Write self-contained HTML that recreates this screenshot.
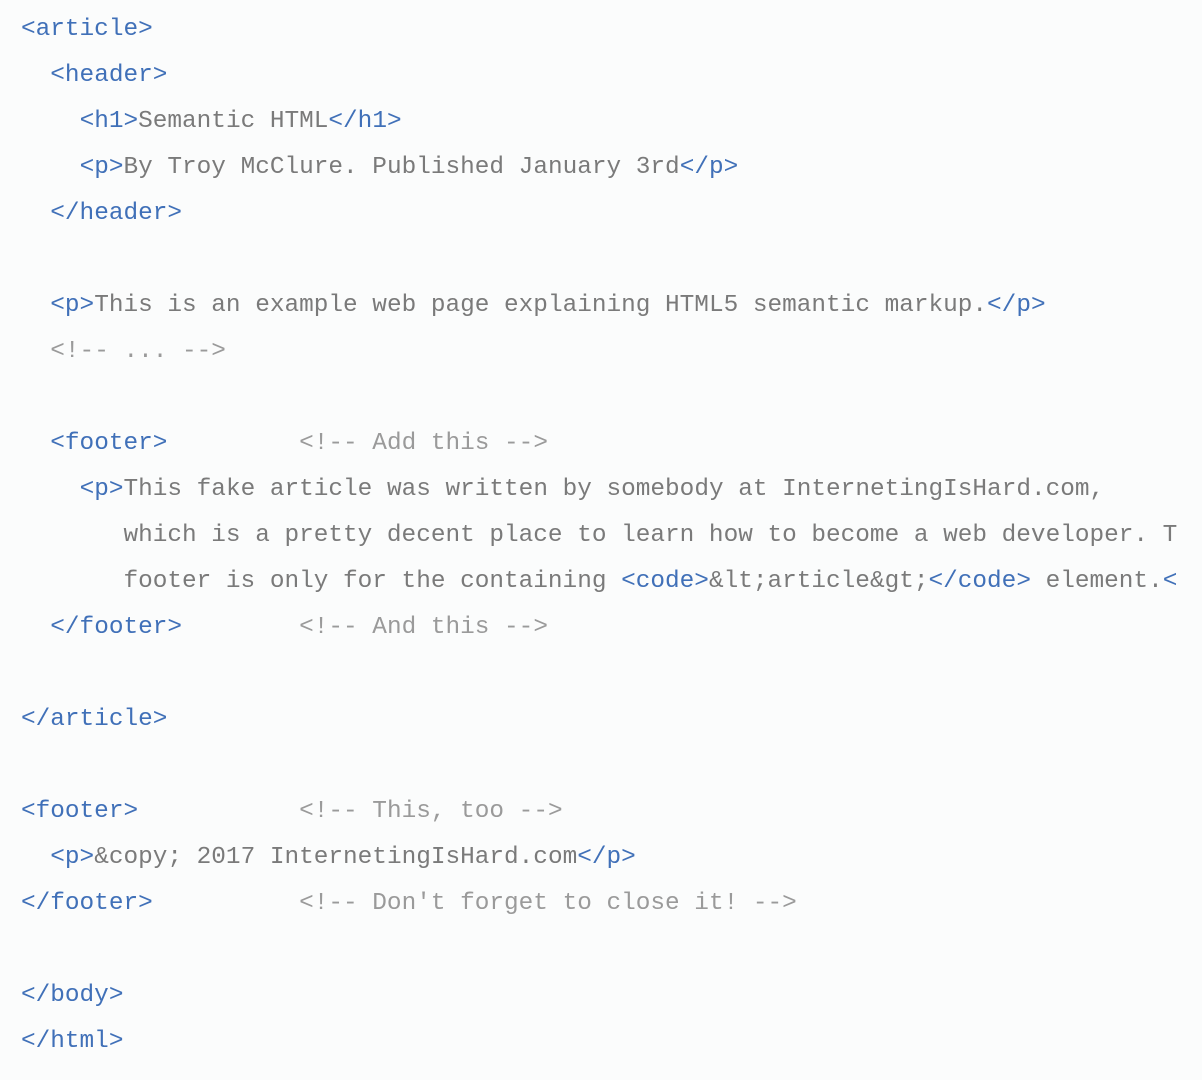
<!DOCTYPE html>
<html><head><style>
html,body{margin:0;padding:0;background:#fbfcfc;}
.wrap{width:1178px;overflow:hidden;padding-top:7px;}
pre{margin:0 0 0 21px;font-family:"Liberation Mono",monospace;font-size:24.4px;line-height:46px;color:#7a7a7a;}
.t{color:#4070b8}.c{color:#9a9a9a}
</style></head><body><div class="wrap"><pre><span class="t">&lt;article&gt;</span>
  <span class="t">&lt;header&gt;</span>
    <span class="t">&lt;h1&gt;</span>Semantic HTML<span class="t">&lt;/h1&gt;</span>
    <span class="t">&lt;p&gt;</span>By Troy McClure. Published January 3rd<span class="t">&lt;/p&gt;</span>
  <span class="t">&lt;/header&gt;</span>

  <span class="t">&lt;p&gt;</span>This is an example web page explaining HTML5 semantic markup.<span class="t">&lt;/p&gt;</span>
  <span class="c">&lt;!-- ... --&gt;</span>

  <span class="t">&lt;footer&gt;</span>         <span class="c">&lt;!-- Add this --&gt;</span>
    <span class="t">&lt;p&gt;</span>This fake article was written by somebody at InternetingIsHard.com,
       which is a pretty decent place to learn how to become a web developer. This
       footer is only for the containing <span class="t">&lt;code&gt;</span>&amp;lt;article&amp;gt;<span class="t">&lt;/code&gt;</span> element.<span class="t">&lt;/p&gt;</span>
  <span class="t">&lt;/footer&gt;</span>        <span class="c">&lt;!-- And this --&gt;</span>

<span class="t">&lt;/article&gt;</span>

<span class="t">&lt;footer&gt;</span>           <span class="c">&lt;!-- This, too --&gt;</span>
  <span class="t">&lt;p&gt;</span>&amp;copy; 2017 InternetingIsHard.com<span class="t">&lt;/p&gt;</span>
<span class="t">&lt;/footer&gt;</span>          <span class="c">&lt;!-- Don't forget to close it! --&gt;</span>

<span class="t">&lt;/body&gt;</span>
<span class="t">&lt;/html&gt;</span>
</pre></div></body></html>
